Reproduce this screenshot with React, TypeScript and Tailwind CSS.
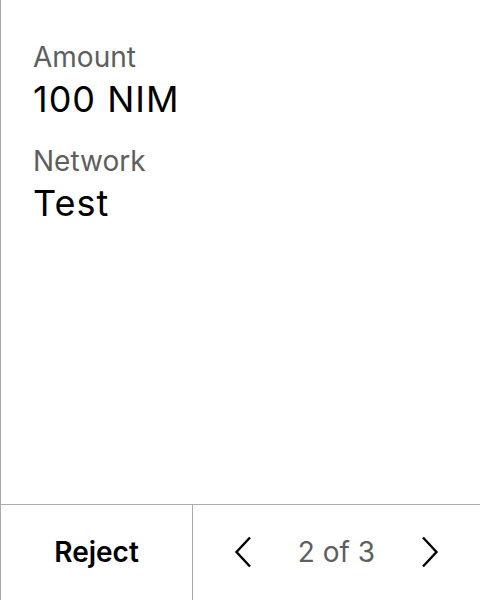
export default function App() {
  return (
    <div
      className="flex h-[600px] w-[480px] flex-col border-l border-[#ababab] bg-white text-black"
      style={{ fontFamily: "Inter, 'Noto Sans', sans-serif" }}
    >
      <div className="flex flex-1 flex-col px-8 pt-[40px]">
        <div className="text-[28px] leading-[34px] text-[#5e5e5e]">Amount</div>
        <div className="mt-[3px] text-[36px] leading-[44px] tracking-[1px]">100 NIM</div>
        <div className="mt-[23px] text-[28px] leading-[34px] text-[#5e5e5e]">Network</div>
        <div className="mt-[3px] text-[36px] leading-[44px] tracking-[1px]">Test</div>
      </div>
      <div className="flex h-[96px] border-t border-[#ababab]">
        <button className="flex w-[192px] items-center justify-center border-r border-[#ababab] pb-[2px] text-[28px] font-semibold">
          Reject
        </button>
        <div className="flex flex-1 items-center justify-center gap-[46px] pb-[2px]">
          <svg width="18" height="32" viewBox="0 0 18 32" fill="none" stroke="black" strokeWidth="2.4">
            <path d="M16 1.5 L2.5 16 L16 30.5" />
          </svg>
          <span className="text-[28px] leading-[34px] text-[#5e5e5e]">2 of 3</span>
          <svg width="18" height="32" viewBox="0 0 18 32" fill="none" stroke="black" strokeWidth="2.4">
            <path d="M2 1.5 L15.5 16 L2 30.5" />
          </svg>
        </div>
      </div>
    </div>
  );
}
